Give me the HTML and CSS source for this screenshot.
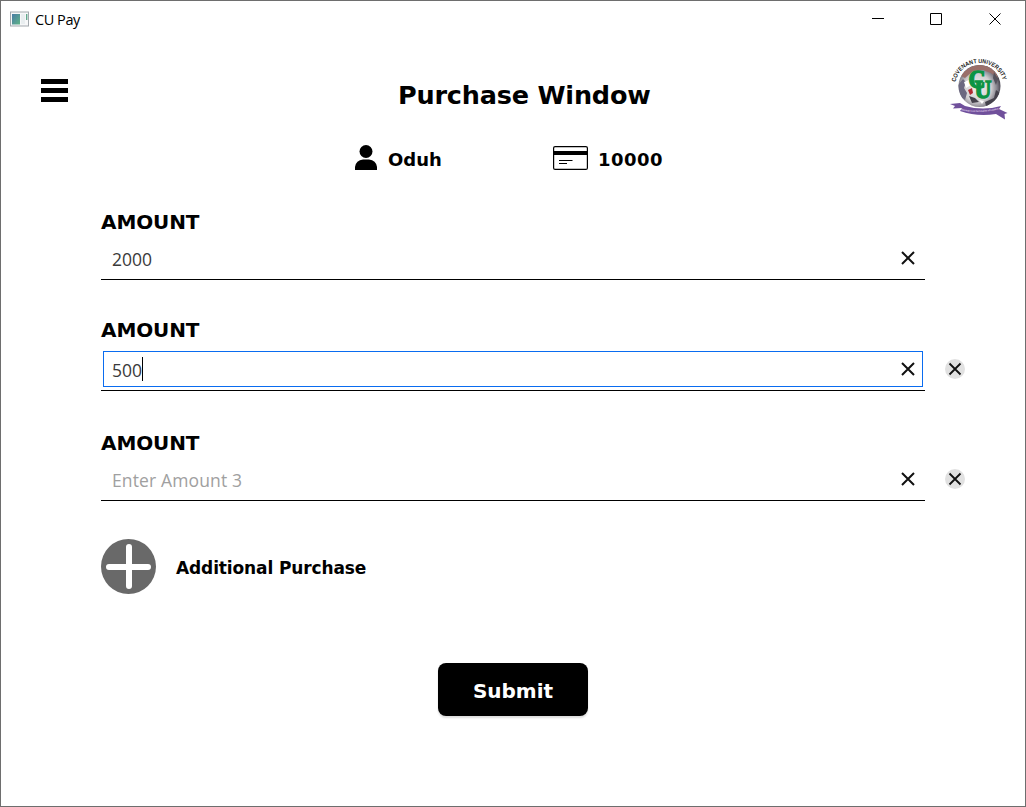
FILE: index.html
```html
<!DOCTYPE html>
<html lang="en">
<head>
<meta charset="utf-8">
<title>CU Pay</title>
<link rel="stylesheet" href="styles.css">
</head>
<body>
<div class="window">
  <header class="titlebar">
    <svg class="app-icon" width="19" height="16" viewBox="0 0 19 16">
      <defs><linearGradient id="pane" x1="0" y1="0" x2="1" y2="1"><stop offset="0" stop-color="#4a7ca5"/><stop offset="1" stop-color="#5fb487"/></linearGradient></defs>
      <rect x=".5" y="1" width="18" height="14" fill="#f7f8f9" stroke="#a3a9ae"/>
      <rect x="2" y="3" width="8" height="10.500" fill="url(#pane)"/>
      <rect x="11" y="3" width="4" height="10" fill="#e9eef0"/>
      <rect x="16" y="3" width="1.400" height="6" fill="#62a98d"/>
    </svg>
    <span class="app-name">CU Pay</span>
    <svg class="controls" width="130" height="14" viewBox="0 0 130 14" fill="none" stroke="#000">
      <path d="M0 6.500h12M58.500 1.500h11v11h-11z"/>
      <path d="M117.500 1.500l11 11M128.500 1.500l-11 11"/>
    </svg>
  </header>

  <section class="top">
    <div class="menu"><i></i><i></i><i></i></div>
    <h1 class="title">Purchase Window</h1>
    <svg class="logo" width="76" height="76" viewBox="0 0 76 76">
      <defs>
        <radialGradient id="globe" cx=".45" cy=".55" r=".55"><stop offset="0" stop-color="#f4f4f2"/><stop offset=".6" stop-color="#d0ced0"/><stop offset=".85" stop-color="#85828c"/><stop offset="1" stop-color="#4c4954"/></radialGradient>
        <path id="arc" d="M15.500 34A24 22 0 0 1 63.500 34"/>
        <path id="motto" d="M21 59.300Q40 63 60 58"/>
        <clipPath id="ball"><circle cx="39.500" cy="35" r="21"/></clipPath>
      </defs>
      <circle cx="39.500" cy="35" r="21" fill="url(#globe)"/>
      <g clip-path="url(#ball)">
        <path d="M21 25Q29 13 42 14T58 27L51 22 43 19 33 20 25 27z" fill="#9a6f6a"/>
        <path d="M18 34l5-6 3 3-2 6 3 5-2 7-7-5z" fill="#6b6880"/>
        <path d="M28 39l4-2 1 5-3 2z" fill="#b22a30"/>
        <path d="M29 45l6 2 4 4-7 1zM45 51l9-4 2-8 4 3-5 11-9 2z" fill="#45424c"/>
        <path d="M54 21l4 7-2 6-3-7z" fill="#55525c"/>
        <path d="M24 31l5-2 2 5-5 3zM39 49l5 1-2 3z" fill="#fff"/>
      </g>
      <text class="logo-arc"><textPath href="#arc" startOffset="3" textLength="64" lengthAdjust="spacingAndGlyphs">COVENANT UNIVERSITY</textPath></text>
      <text class="logo-letter" x="28.500" y="37" textLength="17" lengthAdjust="spacingAndGlyphs">C</text>
      <text class="logo-letter" x="34.500" y="46.500" textLength="17" lengthAdjust="spacingAndGlyphs">U</text>
      <path d="M10 53l10-1 5 3Q43 60 61 55L59 58 67.500 62l-3 1 .5 5.500-9-5.500Q37 66 20 60l2-3-9 .5 2-2.500z" fill="#70509b"/>
      <text class="logo-motto"><textPath href="#motto" textLength="38" lengthAdjust="spacingAndGlyphs">Raising a new Generation of Leaders</textPath></text>
    </svg>
  </section>

  <section class="account">
    <svg class="user" width="22" height="25" viewBox="0 0 22 25"><circle cx="11" cy="6.500" r="6.500"/><path d="M0 25v-3Q1 15 8 14.500h6Q21 15 22 22v3z"/></svg>
    <span class="name">Oduh</span>
    <svg class="card" width="35" height="24" viewBox="0 0 35 24"><rect x=".6" y=".6" width="33.800" height="22.800" rx="1.500" fill="#fff" stroke="#000" stroke-width="1.200"/><path d="M0 5h35v4H0z"/><path d="M6 14.500h13.500M6 17.500h8" stroke="#000" stroke-width="1.200"/></svg>
    <span class="balance">10000</span>
  </section>

  <main class="form">
    <div class="field">
      <label class="label">AMOUNT</label>
      <div class="row">
        <div class="line"><div class="input"><span class="value">2000</span><svg class="clear" width="14" height="14" viewBox="0 0 14 14"><path d="M1 1l12 12M13 1L1 13"/></svg></div></div>
      </div>
    </div>
    <div class="field second">
      <label class="label">AMOUNT</label>
      <div class="row">
        <div class="line"><div class="input focused"><span class="value">500</span><i class="caret"></i><svg class="clear" width="14" height="14" viewBox="0 0 14 14"><path d="M1 1l12 12M13 1L1 13"/></svg></div></div>
        <svg class="remove" width="20" height="20" viewBox="0 0 20 20"><circle cx="10" cy="10" r="10"/><path d="M4.500 4.500l11 11M15.500 4.500l-11 11"/></svg>
      </div>
    </div>
    <div class="field third">
      <label class="label">AMOUNT</label>
      <div class="row">
        <div class="line"><div class="input"><span class="value hint">Enter Amount 3</span><svg class="clear" width="14" height="14" viewBox="0 0 14 14"><path d="M1 1l12 12M13 1L1 13"/></svg></div></div>
        <svg class="remove" width="20" height="20" viewBox="0 0 20 20"><circle cx="10" cy="10" r="10"/><path d="M4.500 4.500l11 11M15.500 4.500l-11 11"/></svg>
      </div>
    </div>
    <div class="additional">
      <svg width="55" height="55" viewBox="0 0 55 55"><circle cx="27.500" cy="27.500" r="27.500" fill="#696969"/><path d="M28 8v39M8 28h39" stroke="#fff" stroke-width="6" stroke-linecap="round"/></svg>
      <span class="additional-text">Additional Purchase</span>
    </div>
  </main>
  <button class="submit">Submit</button>
</div>
</body>
</html>
```
FILE: styles.css
```css
* { box-sizing: border-box; }
body { margin: 0; background: #fff; font-family: Verdana, "DejaVu Sans", sans-serif; color: #000; }
svg { display: block; flex: none; }
.window { width: 1026px; height: 807px; border: 1px solid #6e6e6e; display: flex; flex-direction: column; overflow: hidden; }
.titlebar { display: flex; height: 37px; padding: 10px 23px 0 9px; align-items: flex-start; }
.app-name { margin-left: 6px; font: 14.5px/20px "Open Sans", sans-serif; margin-top: -1px; letter-spacing: -.45px; }
.controls { margin: 1px 0 0 auto; }
.top { display: flex; height: 100px; padding-left: 40px; align-items: flex-start; }
.menu { display: flex; flex-direction: column; gap: 4px; width: 27px; margin-top: 41px; }
.menu i { height: 5px; background: #000; }
.title { margin: 40px 0 0 330px; width: 252px; font-size: 25.5px; line-height: 35px; font-weight: bold; white-space: nowrap; letter-spacing: -.2px; }
.logo { margin: 13px 9px 0 auto; overflow: visible; }
.logo-arc { font: bold 6px "Liberation Sans", sans-serif; fill: #222; }
.logo-letter { font: bold 26px "Liberation Serif", serif; fill: #0c9443; stroke: #0c9443; stroke-width: 1.5px; }
.logo-motto { font: bold 2.4px "Liberation Sans", sans-serif; fill: #e7ddf2; }
.account { display: flex; height: 70px; padding: 7px 0 0 353.5px; align-items: flex-start; font-size: 18px; line-height: 24px; font-weight: bold; }
.name { width: 54px; margin: 3px 111px 0 11.5px; }
.card { margin-top: 1px; }
.balance { margin: 3px 0 0 10px; letter-spacing: .5px; }
.form { display: flex; flex-direction: column; padding-left: 100px; }
.field { height: 108px; }
.label { display: block; font-size: 20px; line-height: 28px; font-weight: bold; letter-spacing: -.1px; }
.row { display: flex; }
.line { width: 824px; border-bottom: 1px solid #000; padding: 7px 2px 3px; }
.input { display: flex; align-items: center; height: 36px; padding: 0 8px 0 9px; }
.field:first-child .line { padding-top: 4px; }
.focused { border: 1px solid #0a6cf0; padding: 0 7px 0 8px; }
.value { font: 17.5px/24px "Open Sans", sans-serif; color: #3a3a3a; padding-top: 2px; }
.hint { color: #a0a0a0; letter-spacing: .13px; }
.caret { width: 1px; height: 24px; background: #000; }
.clear { margin-left: auto; fill: none; stroke: #111; stroke-width: 2; }
.remove { margin: 15px 0 0 20px; stroke: #111; stroke-width: 1.8; }
.remove circle { fill: #e1e1e1; stroke: none; }
.second { height: 113px; }
.third { height: 109px; }
.third .line { padding-top: 4px; }
.third .remove { margin-top: 12px; }
.additional { display: flex; height: 55px; align-items: center; gap: 20px; margin-top: 1px; }
.additional-text { font-size: 17px; font-weight: bold; line-height: 24px; margin-top: 2px; letter-spacing: -.12px; }
.submit { margin: 69px 0 0 437px; width: 150px; height: 53px; border: 0; border-radius: 8px; padding: 3px 0 0; background: #000; color: #fff; font: bold 20px/24px Verdana, "DejaVu Sans", sans-serif; box-shadow: 0 2px 2px #ddd; }
```
